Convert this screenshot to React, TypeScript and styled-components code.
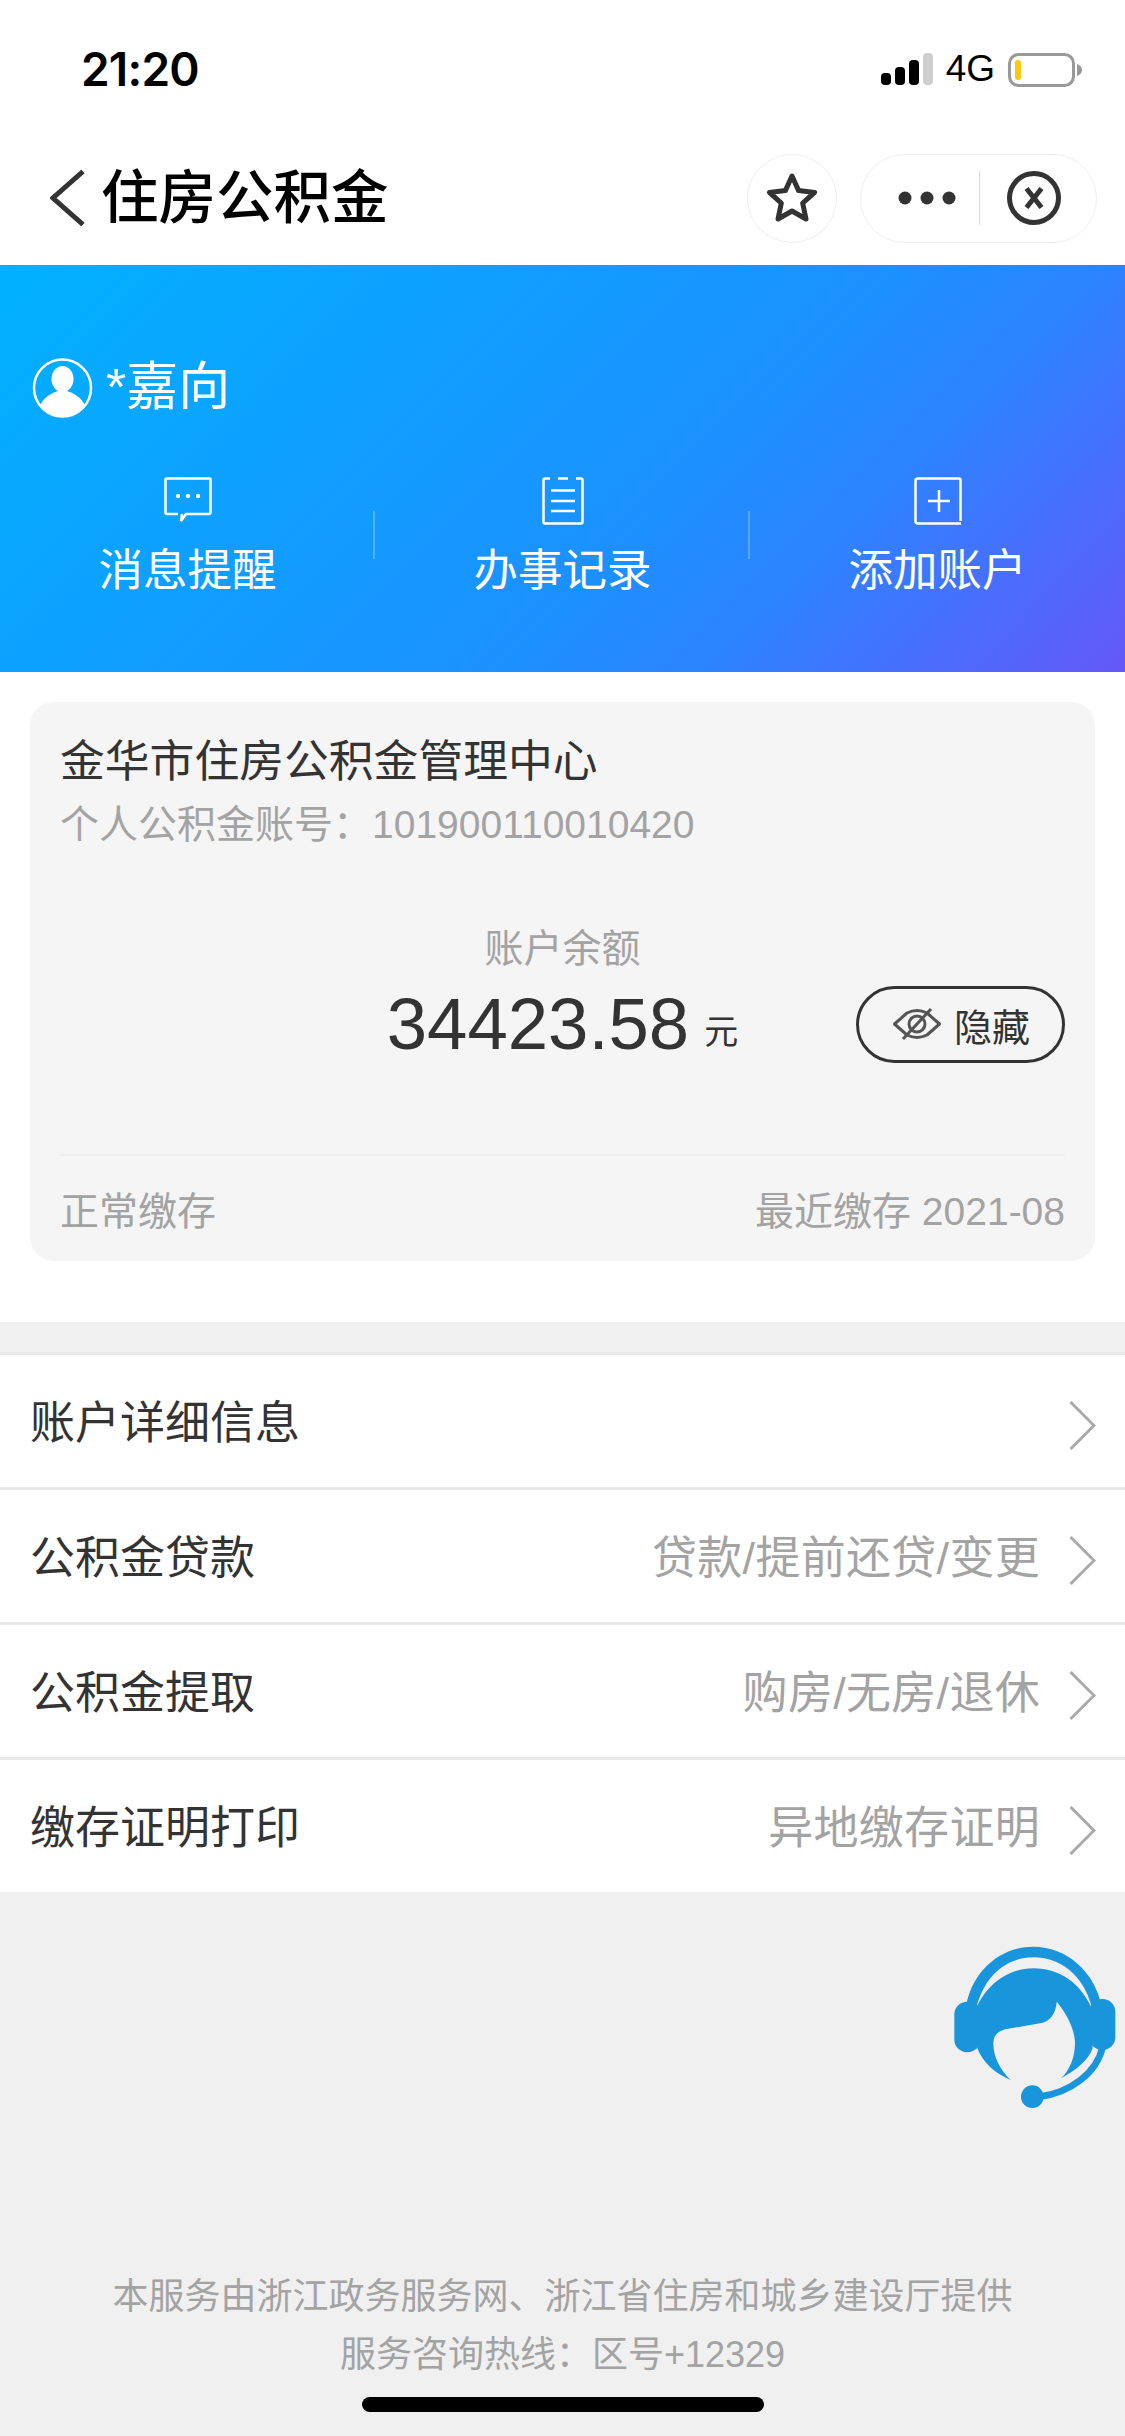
import { createGlobalStyle, styled } from "styled-components";

const GlobalStyle = createGlobalStyle`
  html, body {
    margin: 0;
    padding: 0;
    background: #f0f0f0;
  }
  * {
    box-sizing: border-box;
  }
  body {
    font-family: "Liberation Sans", "Noto Sans CJK SC", sans-serif;
  }
`;

const Page = styled.div`
  position: relative;
  width: 1125px;
  height: 2436px;
  display: flex;
  flex-direction: column;
  overflow: hidden;
  background: #f0f0f0;
`;

const Top = styled.div`
  background: #fff;
  height: 265px;
`;

const StatusBar = styled.div`
  height: 133px;
  display: flex;
  align-items: flex-start;
  justify-content: space-between;
  padding: 53px 43px 0 81px;
`;

const Time = styled.div`
  font-family: Inter, "Liberation Sans", sans-serif;
  font-size: 46px;
  line-height: 32px;
  font-weight: 600;
  letter-spacing: -0.8px;
  color: #000;
`;

const StatusIcons = styled.div`
  display: flex;
  align-items: flex-start;
  gap: 13px;
`;

const Network = styled.div`
  font-family: "Liberation Sans", sans-serif;
  font-size: 37px;
  line-height: 32px;
  color: #000;
`;

const NavBar = styled.div`
  height: 130px;
  display: flex;
  align-items: center;
  padding: 0 28px 0 50px;
`;

const Title = styled.h1`
  flex: 1;
  margin: 0 0 0 16px;
  font-size: 57.5px;
  line-height: 70px;
  font-weight: 500;
  color: #000;
`;

const StarButton = styled.div`
  width: 90px;
  height: 89px;
  margin-right: 23px;
  border: 1px solid #efefef;
  border-radius: 50%;
  display: flex;
  align-items: center;
  justify-content: center;
`;

const Capsule = styled.div`
  width: 237px;
  height: 89px;
  border: 1px solid #efefef;
  border-radius: 45px;
  display: flex;
  align-items: center;
  padding-left: 37px;
`;

const CapsuleLine = styled.div`
  width: 1px;
  height: 54px;
  margin: 0 27px 0 23px;
  background: #d8d8d8;
`;

const Header = styled.div`
  height: 407px;
  padding: 93px 0 0 32px;
  color: #fff;
  background: linear-gradient(135deg, #00b1ff 0%, #1b91ff 58%, #2c84ff 72%, #6558f6 100%);
`;

const UserRow = styled.div`
  height: 60px;
  display: flex;
  align-items: center;
  gap: 13px;
`;

const UserName = styled.div`
  font-size: 52px;
  line-height: 56px;
  padding-bottom: 2px;
`;

const Shortcuts = styled.div`
  margin: 59px 0 0 -32px;
  display: grid;
  grid-template-columns: repeat(3, 375px);
`;

const Shortcut = styled.div<{ $divider?: boolean }>`
  position: relative;
  display: flex;
  flex-direction: column;
  align-items: center;

  &::after {
    content: "";
    display: ${({ $divider }) => ($divider ? "block" : "none")};
    position: absolute;
    right: 0;
    top: 34px;
    width: 2px;
    height: 48px;
    background: rgba(255, 255, 255, 0.25);
  }
`;

const ShortcutIcon = styled.div`
  height: 48px;
  display: flex;
  align-items: flex-start;
`;

const ShortcutLabel = styled.div`
  margin-top: 21px;
  font-size: 44.5px;
  line-height: 50px;
`;

const AccountSection = styled.div`
  background: #fff;
  height: 650px;
  padding: 30px 30px 0 30px;
`;

const Card = styled.div`
  height: 559px;
  padding: 30px 30px 0 30px;
  border-radius: 24px;
  background: #f5f5f5;
`;

const CardTitle = styled.div`
  font-size: 44.8px;
  line-height: 58px;
  color: #333;
`;

const AccountNo = styled.div`
  margin-top: 10px;
  font-size: 39px;
  line-height: 50px;
  color: #a3a3a3;
`;

const BalanceLabel = styled.div`
  margin-top: 74px;
  font-size: 39px;
  line-height: 50px;
  text-align: center;
  color: #a3a3a3;
`;

const BalanceRow = styled.div`
  margin-top: 10px;
  height: 80px;
  display: grid;
  grid-template-columns: 1fr auto 1fr;
  align-items: center;
`;

const Balance = styled.div`
  grid-column: 2;
  display: flex;
  align-items: flex-end;
  gap: 15px;
  color: #333;
`;

const Amount = styled.span`
  font-size: 72.5px;
  line-height: 80px;
`;

const Unit = styled.span`
  margin-bottom: 15px;
  font-size: 34px;
  line-height: 34px;
`;

const HideButton = styled.div`
  justify-self: end;
  width: 209px;
  height: 77px;
  border: 3px solid #333;
  border-radius: 39px;
  display: flex;
  align-items: center;
  padding-left: 34px;
  gap: 13px;
  font-size: 38px;
  color: #333;
`;

const CardLine = styled.div`
  height: 2px;
  margin-top: 90px;
  background: #eeeeee;
`;

const CardFooter = styled.div`
  margin-top: 31px;
  display: flex;
  justify-content: space-between;
  font-size: 39px;
  line-height: 50px;
  color: #a3a3a3;
`;

const Menu = styled.div`
  margin-top: 30px;
  background: #fff;
`;

const MenuRow = styled.div`
  height: 135px;
  border-top: 3px solid #e8e8e8;
  display: flex;
  align-items: center;
  padding: 0 29px 0 30px;
`;

const MenuTitle = styled.div`
  flex: 1;
  padding-top: 5px;
  font-size: 45px;
  line-height: 60px;
  color: #333;
`;

const MenuValue = styled.div`
  padding-top: 5px;
  font-size: 45px;
  line-height: 60px;
  letter-spacing: 0.3px;
  color: #a3a3a3;
`;

const MenuChevron = styled.svg`
  margin: 8px 0 0 29px;
  flex: none;
`;

const Footer = styled.div`
  flex: 1;
  display: flex;
  flex-direction: column;
  align-items: center;
  justify-content: flex-end;
  padding-bottom: 24px;
`;

const FooterText = styled.div`
  font-size: 36px;
  line-height: 58px;
  color: #a3a3a3;
`;

const HomeIndicator = styled.div`
  width: 402px;
  height: 15px;
  margin-top: 13px;
  border-radius: 8px;
  background: #000;
`;

const ServiceIcon = styled.svg`
  position: absolute;
  left: 900px;
  top: 1900px;
`;

const menuItems = [
  { title: "账户详细信息", value: "" },
  { title: "公积金贷款", value: "贷款/提前还贷/变更" },
  { title: "公积金提取", value: "购房/无房/退休" },
  { title: "缴存证明打印", value: "异地缴存证明" },
];

const Signal = () => (
  <svg width="52" height="33" viewBox="0 0 52 33">
    <rect x="0" y="20" width="10" height="12" rx="4" fill="#000" />
    <rect x="14" y="14" width="10" height="18" rx="4" fill="#000" />
    <rect x="28" y="7" width="10" height="25" rx="4" fill="#000" />
    <rect x="42" y="0" width="10" height="32" rx="4" fill="#cfcfcf" />
  </svg>
);

const Battery = () => (
  <svg width="74" height="34" viewBox="0 0 74 34">
    <rect x="1.5" y="1.5" width="64" height="31" rx="9" fill="#fff" stroke="#999" strokeWidth="3" />
    <rect x="7" y="7" width="6" height="20" rx="3" fill="#fcc70e" />
    <path d="M69 11 C72 12 74 14 74 17 C74 20 72 22 69 23 Z" fill="#999" />
  </svg>
);

const BackIcon = () => (
  <svg width="35" height="56" viewBox="0 0 35 56">
    <path d="M33 1.5 L3 28 L33 54.5" fill="none" stroke="#333" strokeWidth="5" />
  </svg>
);

const StarIcon = () => (
  <svg width="54" height="52" viewBox="0 0 54 52">
    <path
      d="M27 4 L33.6 18.6 L49.6 20.4 L37.7 31.2 L41 47 L27 39 L13 47 L16.3 31.2 L4.4 20.4 L20.4 18.6 Z"
      fill="none"
      stroke="#333"
      strokeWidth="5"
      strokeLinejoin="round"
    />
  </svg>
);

const DotsIcon = () => (
  <svg width="58" height="14" viewBox="0 0 58 14">
    <circle cx="7" cy="7" r="6.5" fill="#333" />
    <circle cx="29" cy="7" r="6.5" fill="#333" />
    <circle cx="51" cy="7" r="6.5" fill="#333" />
  </svg>
);

const CloseIcon = () => (
  <svg width="54" height="54" viewBox="0 0 54 54">
    <circle cx="27" cy="27" r="24.5" fill="none" stroke="#333" strokeWidth="5" />
    <path d="M19.5 17.5 L34.5 36.5 M34.5 17.5 L19.5 36.5" stroke="#333" strokeWidth="5" />
  </svg>
);

const AvatarIcon = () => (
  <svg width="61" height="60" viewBox="0 0 61 60">
    <circle cx="30.5" cy="30" r="28.5" fill="none" stroke="#fff" strokeWidth="2.5" />
    <ellipse cx="30.5" cy="21" rx="11" ry="13" fill="#fff" />
    <path d="M30.5 32 C18 34 9 42 8 49 C14 55 22 59 30.5 59 C39 59 47 55 53 49 C52 42 43 34 30.5 32 Z" fill="#fff" />
  </svg>
);

const ChatIcon = () => (
  <svg width="48" height="46" viewBox="0 0 48 46">
    <path
      d="M14 37 H3 Q1.5 37 1.5 35.5 V2.5 Q1.5 1.5 3 1.5 H45 Q46.5 1.5 46.5 2.5 V35.5 Q46.5 37 45 37 H22 L17 44 L18 37"
      fill="none"
      stroke="#fff"
      strokeWidth="2.5"
    />
    <circle cx="14" cy="19" r="2.2" fill="#fff" />
    <circle cx="24" cy="19" r="2.2" fill="#fff" />
    <circle cx="34" cy="19" r="2.2" fill="#fff" />
  </svg>
);

const RecordIcon = () => (
  <svg width="42" height="48" viewBox="0 0 42 48">
    <path
      d="M8 1.5 H3 Q1.5 1.5 1.5 3 V45 Q1.5 46.5 3 46.5 H39 Q40.5 46.5 40.5 45 V3 Q40.5 1.5 39 1.5 H34 M16 1.5 H26"
      fill="none"
      stroke="#fff"
      strokeWidth="2.5"
    />
    <path d="M9 13.5 H33 M9 24 H33 M9 34 H33" stroke="#fff" strokeWidth="2.5" />
  </svg>
);

const AddIcon = () => (
  <svg width="48" height="48" viewBox="0 0 48 48">
    <path
      d="M46.5 44 V3 Q46.5 1.5 45 1.5 H4 Q1.5 1.5 1.5 4 V44 Q1.5 46.5 4 46.5 H47"
      fill="none"
      stroke="#fff"
      strokeWidth="2.5"
    />
    <path d="M25 13 V35 M14 24 H36" stroke="#fff" strokeWidth="2.5" />
  </svg>
);

const EyeOffIcon = () => (
  <svg width="48" height="32" viewBox="0 0 48 32">
    <path d="M1.5 16 L14 5 Q24 0 34 5 L46.5 16 L34 27 Q24 32 14 27 Z" fill="none" stroke="#555" strokeWidth="3" strokeLinejoin="round" />
    <circle cx="24" cy="16" r="8" fill="none" stroke="#555" strokeWidth="3" />
    <path d="M10 31 L38 1" stroke="#555" strokeWidth="3" />
  </svg>
);

const Chevron = () => (
  <MenuChevron width="27" height="49" viewBox="0 0 27 49">
    <path d="M1.5 1 L25 24.5 L1.5 48" fill="none" stroke="#aaa" strokeWidth="3" />
  </MenuChevron>
);

export default function App() {
  return (
    <Page>
      <GlobalStyle />
      <Top>
        <StatusBar>
          <Time>21:20</Time>
          <StatusIcons>
            <Signal />
            <Network>4G</Network>
            <Battery />
          </StatusIcons>
        </StatusBar>
        <NavBar>
          <BackIcon />
          <Title>住房公积金</Title>
          <StarButton>
            <StarIcon />
          </StarButton>
          <Capsule>
            <DotsIcon />
            <CapsuleLine />
            <CloseIcon />
          </Capsule>
        </NavBar>
      </Top>

      <Header>
        <UserRow>
          <AvatarIcon />
          <UserName>*嘉向</UserName>
        </UserRow>
        <Shortcuts>
          <Shortcut $divider>
            <ShortcutIcon>
              <ChatIcon />
            </ShortcutIcon>
            <ShortcutLabel>消息提醒</ShortcutLabel>
          </Shortcut>
          <Shortcut $divider>
            <ShortcutIcon>
              <RecordIcon />
            </ShortcutIcon>
            <ShortcutLabel>办事记录</ShortcutLabel>
          </Shortcut>
          <Shortcut>
            <ShortcutIcon>
              <AddIcon />
            </ShortcutIcon>
            <ShortcutLabel>添加账户</ShortcutLabel>
          </Shortcut>
        </Shortcuts>
      </Header>

      <AccountSection>
        <Card>
          <CardTitle>金华市住房公积金管理中心</CardTitle>
          <AccountNo>个人公积金账号：101900110010420</AccountNo>
          <BalanceLabel>账户余额</BalanceLabel>
          <BalanceRow>
            <Balance>
              <Amount>34423.58</Amount>
              <Unit>元</Unit>
            </Balance>
            <HideButton>
              <EyeOffIcon />
              隐藏
            </HideButton>
          </BalanceRow>
          <CardLine />
          <CardFooter>
            <span>正常缴存</span>
            <span>最近缴存 2021-08</span>
          </CardFooter>
        </Card>
      </AccountSection>

      <Menu>
        {menuItems.map((item) => (
          <MenuRow key={item.title}>
            <MenuTitle>{item.title}</MenuTitle>
            {item.value && <MenuValue>{item.value}</MenuValue>}
            <Chevron />
          </MenuRow>
        ))}
      </Menu>

      <Footer>
        <FooterText>本服务由浙江政务服务网、浙江省住房和城乡建设厅提供</FooterText>
        <FooterText>服务咨询热线：区号+12329</FooterText>
        <HomeIndicator />
      </Footer>

      <ServiceIcon width="225" height="240" viewBox="0 0 675 720">
        <g fill="#1996db">
          <path d="M198 320 C215 215 300 140 400 140 C500 140 585 215 605 320 L575 320 C550 225 480 172 400 172 C320 172 255 225 230 320 Z" />
          <path d="M230 320 C265 250 325 205 400 205 C480 205 540 250 573 320 L578 445 C565 480 530 510 483 535 C510 510 525 470 525 430 C525 390 500 340 470 305 C468 340 450 365 420 370 L320 387 C295 392 280 405 280 430 C280 470 300 510 332 540 C285 520 250 490 232 445 Z" />
          <rect x="163" y="305" width="78" height="152" rx="38" />
          <rect x="568" y="297" width="78" height="153" rx="38" />
          <circle cx="397" cy="590" r="34" />
        </g>
        <path d="M608 440 C590 520 510 578 420 590" fill="none" stroke="#1996db" strokeWidth="20" />
      </ServiceIcon>
    </Page>
  );
}
